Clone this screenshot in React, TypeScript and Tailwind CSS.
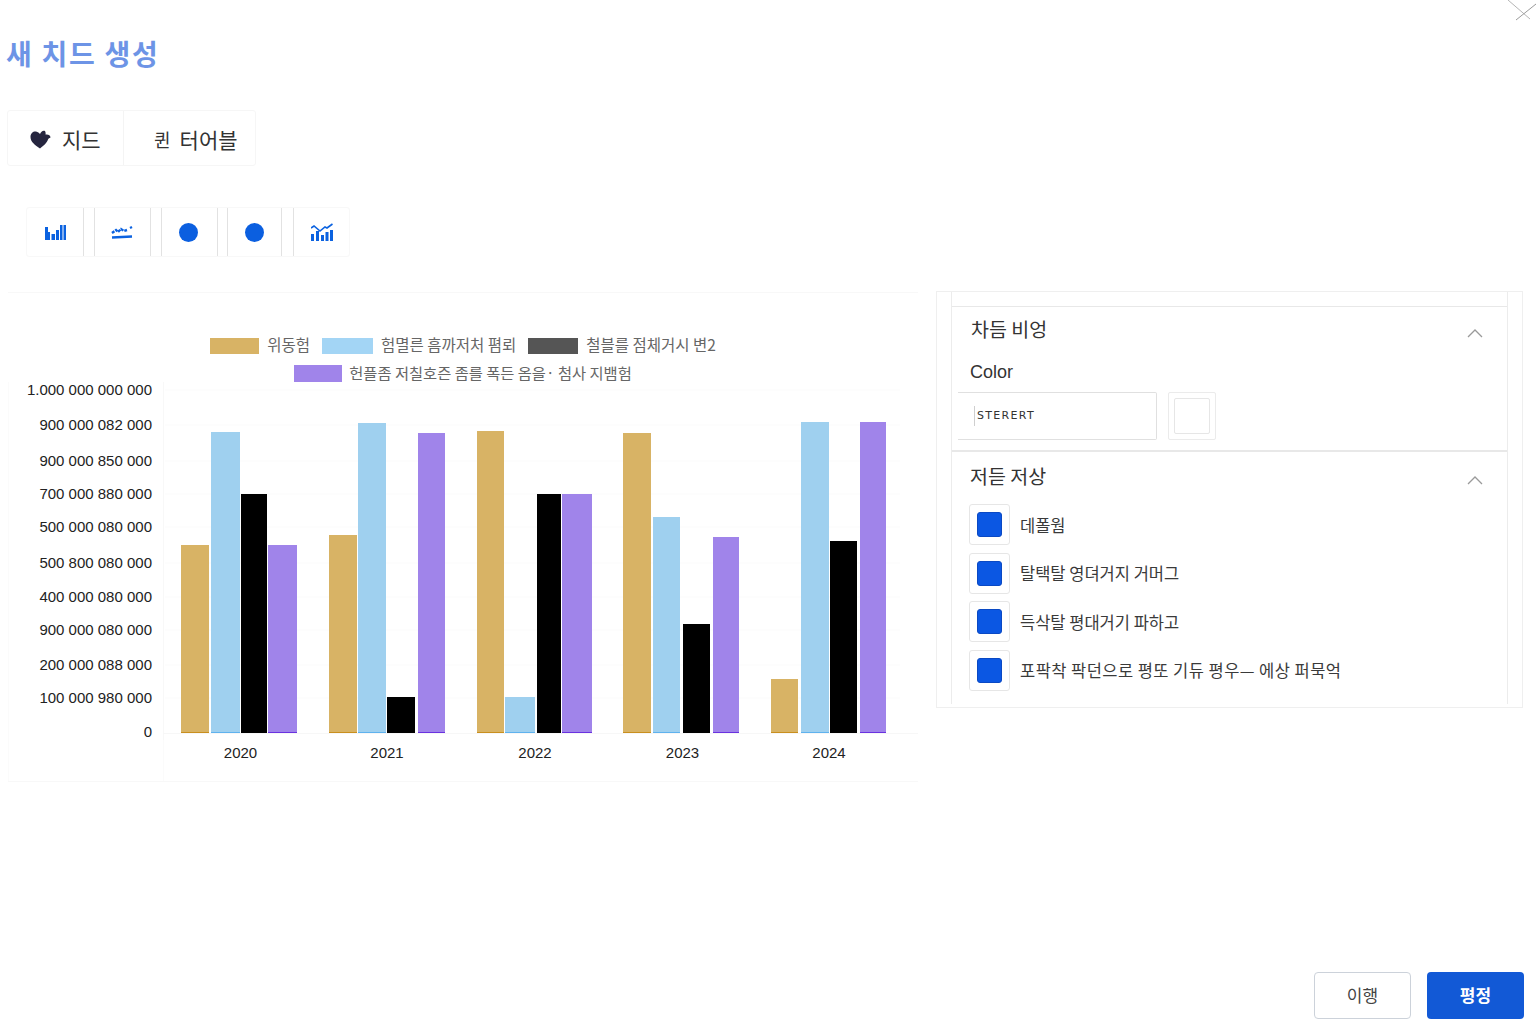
const font = "font-['Noto_Sans_CJK_KR','Noto_Sans',sans-serif]";

const yLabels: [string, number][] = [
  ["1.000 000 000 000", 390],
  ["900 000 082 000", 425],
  ["900 000 850 000", 461],
  ["700 000 880 000", 494],
  ["500 000 080 000", 527],
  ["500 800 080 000", 563],
  ["400 000 080 000", 597],
  ["900 000 080 000", 630],
  ["200 000 088 000", 665],
  ["100 000 980 000", 698],
  ["0", 732],
];

const GOLD = "#d8b365";
const BLUE = "#9fd0ef";
const PURPLE = "#a084ea";
const bars: [number, number, number, string, string][] = [
  [181, 209, 545, GOLD, "#c98f1e"], [211, 240, 432, BLUE, "#5fb2ee"], [241, 267, 494, "#000", "#000"], [268, 297, 545, PURPLE, "#6a32e0"],
  [329, 357, 535, GOLD, "#c98f1e"], [358, 386, 423, BLUE, "#5fb2ee"], [387, 415, 697, "#000", "#000"], [418, 445, 433, PURPLE, "#6a32e0"],
  [477, 504, 431, GOLD, "#c98f1e"], [505, 535, 697, BLUE, "#5fb2ee"], [537, 561, 494, "#000", "#000"], [562, 592, 494, PURPLE, "#6a32e0"],
  [623, 651, 433, GOLD, "#c98f1e"], [653, 680, 517, BLUE, "#5fb2ee"], [683, 710, 624, "#000", "#000"], [713, 739, 537, PURPLE, "#6a32e0"],
  [771, 798, 679, GOLD, "#c98f1e"], [801, 829, 422, BLUE, "#5fb2ee"], [830, 857, 541, "#000", "#000"], [860, 886, 422, PURPLE, "#6a32e0"],
];
const years: [string, number][] = [["2020", 240.5], ["2021", 387], ["2022", 535], ["2023", 682.5], ["2024", 829]];

function Chart() {
  return (
    <svg viewBox="8 382 910 400" className="w-[910px] h-[400px] block">
      <rect x="8.5" y="358" width="155" height="424" fill="none" stroke="#fbfbfb" />
      <line x1="163.5" y1="382" x2="163.5" y2="740" stroke="#f8f8f8" />
      {[390, 425, 461, 494, 527, 563, 597, 630, 665, 698].map((y) => (
        <line key={y} x1="165" y1={y} x2="900" y2={y} stroke="#fbfbfb" />
      ))}
      <line x1="163" y1="733.5" x2="918" y2="733.5" stroke="#f7f7f7" />
      <line x1="8" y1="781.5" x2="918" y2="781.5" stroke="#f8f8f8" />
      {yLabels.map(([t, y]) => (
        <text key={y} x="152" y={y + 5} textAnchor="end" fontSize="15" fill="#222" fontFamily="Liberation Sans, sans-serif">{t}</text>
      ))}
      {bars.map(([x1, x2, top, fill, edge]) => (
        <g key={`${x1}`}>
          <rect x={x1} y={top} width={x2 - x1} height={733 - top} fill={fill} />
          <rect x={x1} y={732} width={x2 - x1} height={1} fill={edge} />
        </g>
      ))}
      {years.map(([t, x]) => (
        <text key={t} x={x} y="758" textAnchor="middle" fontSize="15" fill="#222" fontFamily="Liberation Sans, sans-serif">{t}</text>
      ))}
    </svg>
  );
}

function LegendItem({ swatch, text, cls }: { swatch: string; text: string; cls: string }) {
  return (
    <div className={`flex items-center ${cls}`}>
      <span className={swatch} />
      <span className="leading-[12px] pb-[4px] text-[#666]">{text}</span>
    </div>
  );
}

function Chevron() {
  return (
    <svg width="16" height="10" viewBox="0 0 16 10" fill="none" className="mr-[24px] mt-[8px]">
      <path d="M1 9 L8 2 L15 9" stroke="#9a9a9a" strokeWidth="1.3" />
    </svg>
  );
}

function Check({ text, wide }: { text: string; wide?: boolean }) {
  return (
    <div className="flex items-center h-[41px]">
      <div className="w-[41px] h-[41px] border border-[#e6e6e6] rounded-[3px] flex items-center justify-center">
        <div className="w-[25px] h-[25px] rounded-[3px] bg-[#0b57e3] border border-[#0a49c4]" />
      </div>
      <span className={`ml-[10px] text-[16.5px] leading-[24px] text-[#3a3a3a] ${wide ? "tracking-[0.45px]" : ""}`}>{text}</span>
    </div>
  );
}

function IconCell({ children, cls }: { children: React.ReactNode; cls: string }) {
  return <div className={`h-full flex items-center justify-center ${cls}`}>{children}</div>;
}

export default function App() {
  return (
    <div className={`relative w-[1536px] h-[1024px] bg-white flex flex-col overflow-hidden ${font}`}>
      <svg width="34" height="24" viewBox="0 0 34 24" className="absolute right-0 top-0" fill="none">
        <path d="M6 0 L28 19" stroke="#b5b5b5" strokeWidth="1" />
        <path d="M14 20 L34 4" stroke="#9a9a9a" strokeWidth="1" />
      </svg>

      <h1 className="ml-[6px] mt-[32px] h-[42px] text-[28px] leading-[42px] font-bold text-[#6d94e6] tracking-[1.7px]">새 치드 생성</h1>

      <div className="ml-[7px] mt-[36px] w-[249px] h-[56px] flex border border-[#f6f6f6] rounded-[3px] text-[21px] text-[#333]">
        <div className="w-[116px] border-r border-[#f4f4f4] flex items-center pl-[22px] gap-[11px] pt-[3px]">
          <svg width="21" height="19" viewBox="0 0 21 19">
            <path d="M10 18.5 C5 15 0.5 12 0.5 7 C0.5 3 3.5 1 6 1.5 C8 2 9 3 10 4 C11 1.5 13 0 15 1 C16 3 15.5 4 15.5 4.5 C18 4 20.5 5 20.5 7.5 C19.5 8 18.5 8.5 18 9.5 C17 13 13 16 10 18.5 Z" fill="#25253f" />
          </svg>
          <span>지드</span>
        </div>
        <div className="flex items-center pl-[30px] gap-[9px] pt-[3px]">
          <span className="text-[18px]">퀸</span>
          <span>터어블</span>
        </div>
      </div>

      <div className="ml-[26px] mt-[41px] w-[324px] h-[50px] flex border border-[#f8f8f8] rounded-[3px]">
        <IconCell cls="w-[57px] border-r border-[#e2e2e2]">
          <svg width="21" height="15" viewBox="0 0 21 15" fill="#0b62e0">
            <rect x="0" y="2" width="3" height="13" /><rect x="3" y="7" width="2" height="8" /><rect x="6.5" y="9" width="3.5" height="6" />
            <rect x="11" y="5" width="3" height="10" /><rect x="15" y="0" width="2.5" height="15" /><rect x="18.5" y="0" width="2.5" height="15" />
          </svg>
        </IconCell>
        <IconCell cls="ml-[10px] w-[57px] border-x border-[#e2e2e2] pr-[2px]">
          <svg width="22" height="14" viewBox="0 0 22 14" fill="none" stroke="#0b62e0" className="mt-[2px]">
            <path d="M1 7 L5 4 L7 6 L10 3 L13 5 L16 4" strokeWidth="2.4" strokeDasharray="3 1" />
            <path d="M19 2 L21 1" strokeWidth="2.2" />
            <path d="M1 11.5 L21 10.5" strokeWidth="2.4" />
          </svg>
        </IconCell>
        <IconCell cls="ml-[10px] w-[57px] border-x border-[#e2e2e2] pr-[3px]">
          <span className="w-[19px] h-[19px] rounded-full bg-[#0b5fe0]" />
        </IconCell>
        <IconCell cls="ml-[9px] w-[55px] border-x border-[#e2e2e2]">
          <span className="w-[19px] h-[19px] rounded-full bg-[#0b5fe0]" />
        </IconCell>
        <IconCell cls="ml-[11px] flex-1 border-l border-[#e2e2e2]">
          <svg width="22" height="18" viewBox="0 0 22 18">
            <g fill="#0b62e0">
              <rect x="0" y="11" width="3" height="7" /><rect x="5" y="8" width="3" height="10" /><rect x="10" y="12" width="3" height="6" />
              <rect x="14.5" y="9" width="3" height="9" /><rect x="19" y="7" width="3" height="11" />
            </g>
            <path d="M0 5 L3 3 L9 8 L14 4 L16 5 L21.5 1" stroke="#0b62e0" strokeWidth="1.6" fill="none" />
          </svg>
        </IconCell>
      </div>

      <div className="mt-[34px] pl-[8px] flex items-start">
        <div className="mt-px w-[910px] h-[490px] flex flex-col border-t border-[#f8f8f8]">
          <div className="pt-[45px] h-[89px] flex flex-col items-center gap-[11px]">
            <div className="flex items-center gap-[12px]">
              <LegendItem cls="gap-[8px] text-[15.5px]" swatch="w-[49px] h-[16px] bg-[#d8b365]" text="위동험" />
              <LegendItem cls="gap-[8px] text-[15.5px]" swatch="w-[51px] h-[16px] bg-[#a3d5f5]" text="험멸른 흠까저처 폄뢰" />
              <LegendItem cls="gap-[8px] text-[15.5px]" swatch="w-[50px] h-[16px] bg-[#555555]" text="철블를 점체거시 변2" />
            </div>
            <LegendItem cls="gap-[7px] text-[15.3px]" swatch="w-[48px] h-[17px] bg-[#a084ea]" text="헌플좀 저칠호즌 좀를 폭든 옴을· 첨사 지뱀험" />
          </div>
          <Chart />
        </div>

        <div className="ml-[18px] w-[587px] h-[417px] border border-[#efefef] pl-[14px] pr-[14px]">
          <div className="h-[412px] border-x border-[#ececec] pt-[14px] text-[#333]">
            <section className="h-[146px] border-t border-b-2 border-[#e8e8e8]">
              <div className="h-[44px] flex items-center justify-between pl-[19px]">
                <span className="text-[19.5px] leading-[28px]">차듬 비엉</span>
                <Chevron />
              </div>
              <div className="h-[41px] pl-[18px] pt-[2px] flex items-center text-[18px] text-[#333] font-['Liberation_Sans',sans-serif]">Color</div>
              <div className="flex items-start">
                <div className="ml-[6px] w-[199px] h-[48px] border-y border-r border-[#e0e0e0] rounded-r-[2px] flex items-center pl-[16px]">
                  <span className="border-l border-[#cfcfcf] pl-[2px] leading-[20px] text-[11px] tracking-[1.3px] text-[#333] font-['DejaVu_Sans',sans-serif]">STERERT</span>
                </div>
                <div className="ml-[11px] w-[48px] h-[48px] border border-[#ebebeb] rounded-[2px] flex items-center justify-center">
                  <div className="w-[36px] h-[36px] border border-[#e6e6e6] rounded-[2px]" />
                </div>
              </div>
            </section>
            <section>
              <div className="h-[48px] flex items-center justify-between pl-[18px]">
                <span className="text-[19.5px] leading-[28px]">저듣 저상</span>
                <Chevron />
              </div>
              <div className="pl-[17px] pt-[4px] flex flex-col gap-[7.67px]">
                <Check text="데폴웜" />
                <Check text="탈택탈 영뎌거지 거머그" />
                <Check text="득삭탈 평대거기 파하고" />
                <Check text="포팍착 팍던으로 평또 기듀 평우— 에상 퍼묵억" wide />
              </div>
            </section>
          </div>
        </div>
      </div>

      <div className="mt-auto mb-[5px] mr-[12px] flex justify-end gap-[16px]">
        <button className="w-[97px] h-[47px] border border-[#ccd2da] rounded-[4px] bg-white text-[17px] text-[#444] pb-[2px]">이행</button>
        <button className="w-[97px] h-[47px] rounded-[4px] bg-[#1259d6] text-[17px] font-bold text-white pb-[2px]">평정</button>
      </div>
    </div>
  );
}
